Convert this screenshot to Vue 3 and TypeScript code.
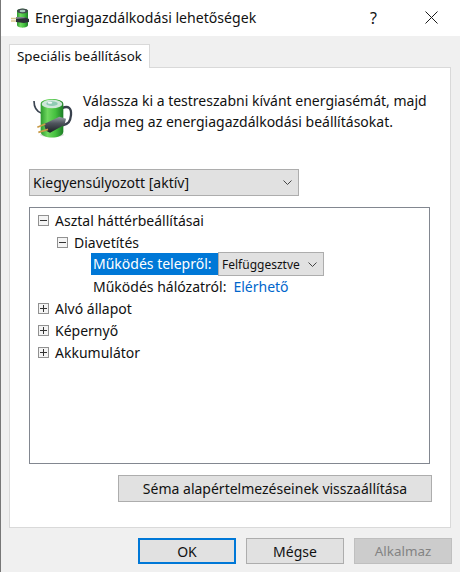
<template>
  <div class="window">
    <header class="titlebar">
      <svg class="title-icon" width="20" height="20" viewBox="0 0 20 20">
        <path d="M7 3C7 0 18 0 18 3V17C18 20.500 7 20.500 7 17Z" fill="url(#body)" />
        <ellipse cx="12.500" cy="3" rx="5.500" ry="2.500" fill="#3f4a4c" />
        <ellipse cx="12.500" cy="3" rx="3" ry="1.200" fill="#a9c9bc" />
        <path d="M6 9 14 9 19 11 19 14 14 15 6 14Z" fill="#2b3036" />
        <path d="M6 9 14 9 16 10 6 11Z" fill="#7d858c" />
        <path d="M1 10.500H6M1 13H6" stroke="#d9c58d" stroke-width="1.500" fill="none" />
      </svg>
      <span class="title-text">Energiagazdálkodási lehetőségek</span>
      <span class="help">?</span>
      <svg class="close" width="13" height="13" viewBox="0 0 13 13">
        <path d="M0.5 0.5 12.5 12.5 M12.5 0.5 0.5 12.5" stroke="#1a1a1a" stroke-width="1" fill="none" />
      </svg>
    </header>

    <main class="content">
      <div class="tab">Speciális beállítások</div>
      <section class="panel">
        <div class="intro">
          <svg class="battery" width="40" height="41" viewBox="99 291 120 123">
            <defs>
              <linearGradient id="body" x1="0" x2="1" y1="0" y2="0">
                <stop offset="0" stop-color="#2c9a2e" />
                <stop offset="0.3" stop-color="#6fd85f" />
                <stop offset="0.65" stop-color="#45c03f" />
                <stop offset="1" stop-color="#1c7d25" />
              </linearGradient>
              <linearGradient id="plug" x1="0" x2="0" y1="0" y2="1">
                <stop offset="0" stop-color="#98a0a6" />
                <stop offset="0.4" stop-color="#50565e" />
                <stop offset="1" stop-color="#1b1f23" />
              </linearGradient>
            </defs>
            <path d="M102 303C102 325 110 335 125 340" stroke="#3c4552" stroke-width="5" fill="none" />
            <path d="M186 325C205 315 215 325 213 345C211 365 205 372 188 376" stroke="#39414d" stroke-width="7" fill="none" />
            <ellipse cx="156" cy="404" rx="36" ry="8" fill="#c9c9c9" opacity="0.6" />
            <path d="M122 312C122 292 190 292 190 312V395C190 418 122 418 122 395Z" fill="url(#body)" />
            <ellipse cx="156" cy="312" rx="31" ry="13" fill="#cfe6da" />
            <ellipse cx="156" cy="311" rx="17" ry="7" fill="#8fcbb4" />
            <ellipse cx="150" cy="308" rx="7" ry="3" fill="#f2f7f5" />
            <path d="M132 372 178 350 198 356 194 374 150 398 138 392Z" fill="url(#plug)" />
            <path d="M112 382 136 372" stroke="#c99b48" stroke-width="5" fill="none" />
            <path d="M115 397 144 388" stroke="#c99b48" stroke-width="5" fill="none" />
          </svg>
          <p class="intro-text">
            Válassza ki a testreszabni kívánt energiasémát, majd<br />
            adja meg az energiagazdálkodási beállításokat.
          </p>
        </div>

        <div class="select scheme">
          <span>Kiegyensúlyozott [aktív]</span>
          <svg class="chevron" width="9" height="5" viewBox="0 0 9 5">
            <path d="M0.5 0.5 4.5 4.5 8.5 0.5" stroke="#444" fill="none" />
          </svg>
        </div>

        <div class="tree">
          <div v-for="row in rows" :key="row.label" class="tree-row" :class="'level-' + row.level">
            <span v-if="row.toggle" class="toggle" :class="{ open: row.toggle === 'open' }"></span>
            <template v-if="row.level === 2 && row.selected">
              <span class="selected">{{ row.label }}</span>
              <div class="select inline">
                <span>{{ row.value }}</span>
                <svg class="chevron" width="9" height="5" viewBox="0 0 9 5">
                  <path d="M0.5 0.5 4.5 4.5 8.5 0.5" stroke="#444" fill="none" />
                </svg>
              </div>
            </template>
            <template v-else>
              <span class="label">{{ row.label }}</span>
              <a v-if="row.value" class="link">{{ row.value }}</a>
            </template>
          </div>
        </div>

        <div class="restore-row">
          <button class="btn restore">Séma alapértelmezéseinek visszaállítása</button>
        </div>
      </section>

      <footer class="actions">
        <button class="btn action default">OK</button>
        <button class="btn action">Mégse</button>
        <button class="btn action disabled">Alkalmaz</button>
      </footer>
    </main>
  </div>
</template>

<script setup lang="ts">
interface Row {
  label: string
  level: number
  toggle?: 'open' | 'closed'
  value?: string
  selected?: boolean
}

const rows: Row[] = [
  { label: 'Asztal háttérbeállításai', level: 0, toggle: 'open' },
  { label: 'Diavetítés', level: 1, toggle: 'open' },
  { label: 'Működés telepről:', level: 2, value: 'Felfüggesztve', selected: true },
  { label: 'Működés hálózatról:', level: 2, value: 'Elérhető' },
  { label: 'Alvó állapot', level: 0, toggle: 'closed' },
  { label: 'Képernyő', level: 0, toggle: 'closed' },
  { label: 'Akkumulátor', level: 0, toggle: 'closed' }
]
</script>

<style>
html,
body {
  margin: 0;
  background: #f0f0f0;
}
</style>

<style scoped>
.window {
  width: 460px;
  height: 572px;
  box-sizing: border-box;
  display: flex;
  flex-direction: column;
  border-left: 1px solid #777;
  font-family: "Noto Sans", "Open Sans", sans-serif;
  font-size: 14px;
  color: #111;
  overflow: hidden;
}

.titlebar {
  height: 36px;
  flex: none;
  display: flex;
  align-items: center;
  background: #fff;
  padding-left: 9px;
}

.title-icon {
  margin-right: 5px;
}

.title-text {
  font-size: 14.1px;
  flex: 1;
  margin-top: -1px;
}

.help {
  font-size: 16px;
  margin-right: 48px;
  margin-top: -1px;
}

.close {
  margin-right: 22px;
  margin-top: -1px;
}

.content {
  flex: 1;
  display: flex;
  flex-direction: column;
  padding: 8px 9px 0 8px;
  min-height: 0;
}

.tab {
  align-self: flex-start;
  box-sizing: border-box;
  width: 141px;
  height: 24px;
  margin-bottom: -1px;
  position: relative;
  z-index: 1;
  background: #fff;
  border: 1px solid #d9d9d9;
  border-bottom: none;
  padding-left: 7px;
  line-height: 22px;
  font-size: 13.4px;
}

.panel {
  box-sizing: border-box;
  height: 461px;
  background: #fff;
  border: 1px solid #d9d9d9;
  padding: 0 19px;
  display: flex;
  flex-direction: column;
}

.intro {
  display: flex;
  height: 101px;
  padding-top: 22px;
  box-sizing: border-box;
}

.battery {
  margin: 7px 10px 0 4px;
  flex: none;
}

.intro-text {
  margin: 0;
  font-size: 14px;
  line-height: 21px;
  white-space: nowrap;
}

.select {
  display: flex;
  align-items: center;
  justify-content: space-between;
  box-sizing: border-box;
  background: #e1e1e1;
  border: 1px solid #adadad;
}

.scheme {
  width: 270px;
  height: 27px;
  padding: 0 6px 0 3px;
}

.tree {
  box-sizing: border-box;
  width: 401px;
  height: 257px;
  margin-top: 11px;
  border: 1px solid #828790;
  padding-top: 1px;
}

.tree-row {
  height: 22px;
  display: flex;
  align-items: center;
  white-space: nowrap;
}

.level-0 {
  padding-left: 8px;
}

.level-1 {
  padding-left: 27px;
}

.level-2 {
  padding-left: 61px;
}

.toggle {
  box-sizing: border-box;
  width: 11px;
  height: 11px;
  border: 1px solid #919191;
  background:
    linear-gradient(#333, #333) center / 7px 1px no-repeat,
    linear-gradient(#333, #333) center / 1px 7px no-repeat,
    #f4f4f4;
  margin-right: 4px;
  flex: none;
}

.toggle.open {
  background:
    linear-gradient(#333, #333) center / 7px 1px no-repeat,
    #f4f4f4;
}

.selected {
  box-sizing: border-box;
  width: 127px;
  background: #0078d7;
  color: #fff;
  height: 22px;
  line-height: 22px;
  padding: 0 2px;
}

.inline {
  width: 106px;
  height: 24px;
  padding: 0 6px 0 3px;
  font-size: 12px;
  position: relative;
  z-index: 1;
}

.label {
  padding: 0 2px;
}

.link {
  color: #0066cc;
  margin-left: 5px;
}

.restore-row {
  display: flex;
  justify-content: flex-end;
  margin-top: 11px;
  margin-right: -1px;
}

.btn {
  box-sizing: border-box;
  font: inherit;
  color: #111;
  background: #e1e1e1;
  border: 1px solid #adadad;
  padding: 0;
}

.restore {
  width: 314px;
  height: 27px;
}

.actions {
  display: flex;
  justify-content: flex-end;
  gap: 10px;
  margin-top: 10px;
  margin-right: -1px;
}

.action {
  width: 98px;
  height: 26px;
}

.default {
  border: 2px solid #0078d7;
}

.disabled {
  background: #cccccc;
  border-color: #bfbfbf;
  color: #838383;
  font-size: 13.4px;
}
</style>
